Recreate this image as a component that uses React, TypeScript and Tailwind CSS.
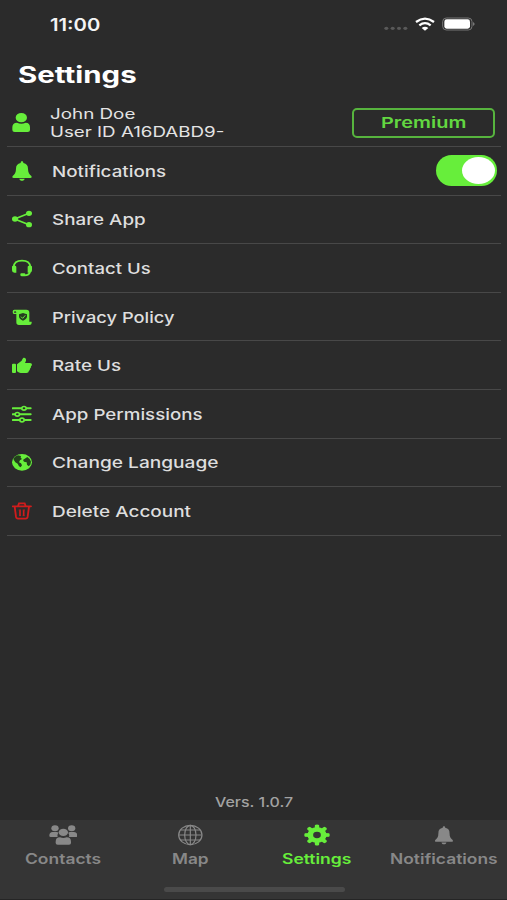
import { useLayoutEffect, useRef, useState } from "react";
import type { ReactNode } from "react";

/** Single-line label whose glyphs are widened to fill the given width. */
function Label({ text, width, className = "" }: { text: string; width: number; className?: string }) {
  const ref = useRef<HTMLSpanElement>(null);
  const [scale, setScale] = useState(1);
  useLayoutEffect(() => {
    if (ref.current) setScale(width / ref.current.offsetWidth);
  }, [text, width]);
  return (
    <span className={"block whitespace-nowrap " + className} style={{ width }}>
      <span ref={ref} className="inline-block origin-left" style={{ transform: `scaleX(${scale})` }}>
        {text}
      </span>
    </span>
  );
}

function Icon({ children, className = "text-[#67ee3b]" }: { children: ReactNode; className?: string }) {
  return (
    <svg viewBox="0 0 60 60" className={"size-5 shrink-0 " + className} fill="currentColor">
      {children}
    </svg>
  );
}

const bell = (
  <path d="M30 1c-3 0-4 2-4 5C16 8 12 14 12 23c0 12-4 17-10 22-2 3-1 6 3 6h50c4 0 5-3 3-6-6-5-10-10-10-22 0-9-4-15-14-17 0-3-1-5-4-5ZM22 53c1 4 4 6 8 6s7-2 8-6Z" />
);

const rows = [
  {
    text: "Share App", width: 94,
    icon: (
      <Icon>
        <path d="M51 13 8 30l43 17" fill="none" stroke="currentColor" strokeWidth="5" />
        <ellipse cx="9" cy="30" rx="9" ry="8" /><ellipse cx="51" cy="13" rx="9" ry="8" /><ellipse cx="51" cy="47" rx="9" ry="8" />
      </Icon>
    ),
  },
  {
    text: "Contact Us", width: 99,
    icon: (
      <Icon>
        <path d="M5 27C6 14 15 8 30 8s24 6 25 19M54 42c-2 7-7 10-16 10H28" fill="none" stroke="currentColor" strokeWidth="5.500" />
        <path d="M3 23h6q4 0 4 4v17H7q-7 0-7-7V27q0-4 3-4ZM51 23h6q3 0 3 4v10q0 7-7 7h-6V27q0-4 4-4Z" />
        <rect x="25" y="46" width="15" height="8" rx="3" />
      </Icon>
    ),
  },
  {
    text: "Privacy Policy", width: 123,
    icon: (
      <Icon>
        <path fillRule="evenodd" d="M7 8h36q9 0 9 9v27h7v4q0 6-7 6H21q-8 0-8-8V21H6q-4 0-4-7 0-6 5-6Zm2 5q-3 0-3 4h7q0-4-4-4Z" />
        <path d="M33 18l-12 4v6q0 9 12 13 12-4 12-13v-6Z" fill="#263d20" />
        <path d="m27 29 5 5 8-9" fill="none" stroke="currentColor" strokeWidth="3" />
      </Icon>
    ),
  },
  {
    text: "Rate Us", width: 69,
    icon: (
      <Icon>
        <path d="M3 26h6q3 0 3 3v22q0 3-3 3H3q-3 0-3-3V29q0-3 3-3ZM15 28l12-9c4-3 4-11 9-11s7 4 6 9l-3 7h15q6 0 6 5-1 4-3 5 1 4-3 7 0 4-3 6-1 7-8 7H26q-5 0-11-5Z" />
      </Icon>
    ),
  },
  {
    text: "App Permissions", width: 151,
    icon: (
      <Icon>
        <path d="M2 13h54M2 31h54M2 48h54" stroke="currentColor" strokeWidth="6" strokeLinecap="round" />
        <g fill="#2b2b2b" stroke="currentColor" strokeWidth="5">
          <ellipse cx="36" cy="13" rx="6.500" ry="5.500" /><ellipse cx="16" cy="31" rx="6.500" ry="5.500" /><ellipse cx="30" cy="48" rx="6.500" ry="5.500" />
        </g>
      </Icon>
    ),
  },
  {
    text: "Change Language", width: 167,
    icon: (
      <Icon>
        <ellipse cx="30" cy="31" rx="30" ry="25" />
        <path d="M4 20Q9 12 18 10l9 2-1 5 4 4-6 4-3 6 6 3 3 6-4 6-5-3-4-8-7-4-4-6ZM38 20l8-5 7 6 4 8-2 9-5 5-5-5-1-7-8-2-3-5Z" fill="#24401d" />
      </Icon>
    ),
  },
  {
    text: "Delete Account", width: 139,
    icon: (
      <Icon className="text-[#d01c1c]">
        <path d="M2 16h55M18 15l3-8h17l3 8M8 17l4 30q1 6 6 6h23q5 0 6-6l4-30" fill="none" stroke="currentColor" strokeWidth="5.500" strokeLinecap="round" />
        <path d="M24 28v16M35 28v16" stroke="currentColor" strokeWidth="5" />
        <path d="M20 27h7M32 27h7M21 44h6M32 44h6" stroke="currentColor" strokeWidth="2.500" />
      </Icon>
    ),
  },
];

function Row({ icon, text, width, children }: { icon: ReactNode; text: string; width: number; children?: ReactNode }) {
  return (
    <div className="ml-[7px] mr-[6px] flex h-[48.6px] items-center border-b border-[#484848] pl-[5px]">
      {icon}
      <Label text={text} width={width} className="ml-[19.5px] pt-[2px] text-[15px] font-medium leading-5 text-[#dedede]" />
      {children}
    </div>
  );
}

function Tab({ text, width, active, children }: { text: string; width: number; active?: boolean; children: ReactNode }) {
  return (
    <div className={"flex flex-1 flex-col items-center pt-1 " + (active ? "text-[#67ee3b]" : "text-[#888888]")}>
      <svg viewBox="0 0 84 66" className="h-[22px] w-7" fill="currentColor">{children}</svg>
      <Label text={text} width={width} className="mt-[3px] text-[14px] font-semibold leading-5" />
    </div>
  );
}

const teeth = [0, 45, 90, 135, 180, 225, 270, 315];

export default function App() {
  return (
    <div className="flex h-[900px] w-[507px] flex-col overflow-hidden bg-[#2b2b2b] font-['Inter',sans-serif]">
      <div className="flex h-12 shrink-0 items-center pl-[50px]">
        <Label text="11:00" width={50} className="pt-px text-[17px] font-semibold leading-6 text-[#f4f4f4]" />
        <svg viewBox="0 0 282 48" className="ml-[281px] h-4 w-[94px] shrink-0" fill="none">
          <g fill="#595959">
            <ellipse cx="16" cy="37" rx="6" ry="5" /><ellipse cx="35" cy="37" rx="6" ry="5" />
            <ellipse cx="54" cy="37" rx="6" ry="5" /><ellipse cx="73" cy="37" rx="6" ry="5" />
          </g>
          <path d="M105 18q27-20 54 0M115 28q17-13 34 0" stroke="#fff" strokeWidth="7" />
          <path d="M122 36q10-8 20 0l-10 8Z" fill="#fff" />
          <rect x="185" y="6" width="88" height="36" rx="11" stroke="#777" strokeWidth="3" />
          <rect x="190" y="10" width="77" height="28" rx="7" fill="#fff" />
          <path d="M276 18q10 6 0 12Z" fill="#777" />
        </svg>
      </div>
      <div className="flex h-[53px] shrink-0 items-center pl-[18px]">
        <Label text="Settings" width={119} className="pt-px text-[22.5px] font-bold leading-7 text-white" />
      </div>
      <div className="ml-[7px] mr-[6px] flex h-[46px] shrink-0 items-center border-b border-[#484848] pb-[2px] pl-[5px]">
        <Icon>
          <ellipse cx="28" cy="14" rx="17" ry="14" />
          <path d="M15 29q13 6 26 0 13 0 13 14v8q0 6-7 6H8q-7 0-7-6v-8q0-14 14-14Z" />
        </Icon>
        <div className="ml-[18px]">
          <Label text="John Doe" width={86} className="h-[17.5px] text-[14px] leading-[17px] text-[#e4e4e4]" />
          <Label text="User ID A16DABD9-" width={174} className="h-[17px] text-[14px] leading-[17px] text-[#e4e4e4]" />
        </div>
        <div className="ml-auto mr-[6px] flex h-[30px] w-[143px] items-center justify-center rounded-[5px] border-2 border-[#57b43e]">
          <Label text="Premium" width={85} className="text-[15px] font-semibold leading-5 text-[#62d741]" />
        </div>
      </div>
      <Row text="Notifications" width={114} icon={<Icon>{bell}</Icon>}>
        <div className="ml-auto mr-1 flex h-[31px] w-[61px] items-center justify-end rounded-full bg-[#67ee3b] pr-[2px]">
          <div className="h-[27px] w-[33px] rounded-[50%] bg-white" />
        </div>
      </Row>
      {rows.map((row) => (
        <Row key={row.text} {...row} />
      ))}
      <div className="mt-auto flex shrink-0 justify-center pb-[8px]">
        <Label text="Vers. 1.0.7" width={78} className="text-[13.5px] font-medium leading-5 text-[#a2a2a2]" />
      </div>
      <div className="flex h-[79px] shrink-0 flex-col bg-[#353535]">
        <div className="flex">
          <Tab text="Contacts" width={76}>
            <g transform="translate(1 0)">
              <ellipse cx="17" cy="13" rx="11" ry="9" /><ellipse cx="67" cy="13" rx="11" ry="9" />
              <path d="M10 24h12q4 0 5 3-4 5-2 12H4q-4 0-4-4 0-11 10-11ZM62 24h12q10 0 10 11 0 4-4 4H59q2-7-2-12 1-3 5-3Z" />
              <ellipse cx="42" cy="25" rx="14" ry="11" />
              <path d="M32 40q10 4 20 0 13 0 13 13v4q0 5-6 5H25q-6 0-6-5v-4q0-13 13-13Z" />
            </g>
          </Tab>
          <Tab text="Map" width={37}>
            <g fill="none" stroke="currentColor" strokeWidth="3.500">
              <ellipse cx="43" cy="33" rx="35" ry="29" /><ellipse cx="43" cy="33" rx="17" ry="29" />
              <path d="M43 4v58M8 33h70M14 18h58M14 48h58" />
            </g>
          </Tab>
          <Tab text="Settings" width={70} active>
            {teeth.map((angle) => (
              <g key={angle} transform={`matrix(1.22 0 0 1 42 33) rotate(${angle})`}>
                <path d="M-6-18-5-30Q0-33 5-30L6-18Z" />
              </g>
            ))}
            <g transform="matrix(1.22 0 0 1 42 33)">
              <circle r="16.500" fill="none" stroke="currentColor" strokeWidth="14" />
            </g>
          </Tab>
          <Tab text="Notifications" width={108}>
            <g transform="translate(14 6) scale(.93)">{bell}</g>
          </Tab>
        </div>
        <div className="mb-[7px] ml-[164px] mt-auto h-[5px] w-[181px] rounded-full bg-[#4a4a4a]" />
      </div>
      <div className="h-px shrink-0 bg-[#252525]" />
    </div>
  );
}
